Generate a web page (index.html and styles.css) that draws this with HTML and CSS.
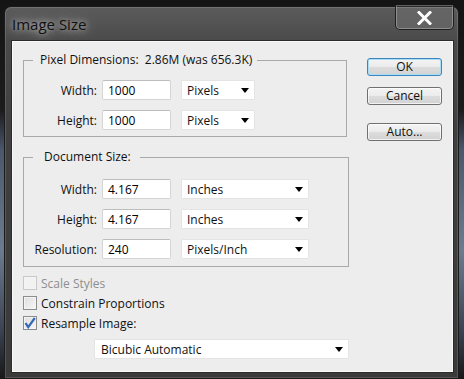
FILE: index.html
```html
<!DOCTYPE html>
<html lang="en">
<head>
    <meta charset="UTF-8" />
    <title>Image Size</title>
    <link rel="stylesheet" href="styles.css">
</head>
<body>

<div class="window">
    <div class="titlebar">
        <span class="title">Image Size</span>
        <button class="close" aria-label="Close">
            <svg width="15" height="14" viewBox="0 0 15 14">
                <path d="M2 1.5 L13 12.5 M13 1.5 L2 12.5" stroke="#fff" stroke-width="3" stroke-linecap="square" fill="none"/>
            </svg>
        </button>
    </div>

    <div class="client">
        <div class="main">
            <fieldset class="group pixel">
                <legend>Pixel Dimensions:&nbsp; 2.86M (was 656.3K)</legend>
                <div class="row">
                    <label>Width:</label>
                    <input type="text" value="1000">
                    <div class="select unit"><span>Pixels</span><i class="caret"></i></div>
                </div>
                <div class="row">
                    <label>Height:</label>
                    <input type="text" value="1000">
                    <div class="select unit"><span>Pixels</span><i class="caret"></i></div>
                </div>
            </fieldset>

            <fieldset class="group doc">
                <legend>Document Size:</legend>
                <div class="row">
                    <label>Width:</label>
                    <input type="text" value="4.167">
                    <div class="select wide"><span>Inches</span><i class="caret"></i></div>
                </div>
                <div class="row">
                    <label>Height:</label>
                    <input type="text" value="4.167">
                    <div class="select wide"><span>Inches</span><i class="caret"></i></div>
                </div>
                <div class="row">
                    <label>Resolution:</label>
                    <input type="text" value="240">
                    <div class="select wide"><span>Pixels/Inch</span><i class="caret"></i></div>
                </div>
            </fieldset>

            <div class="options">
                <div class="check disabled"><span class="box"></span>Scale Styles</div>
                <div class="check"><span class="box"></span>Constrain Proportions</div>
                <div class="check">
                    <span class="box">
                        <svg width="12" height="12" viewBox="0 0 12 12">
                            <path d="M1.5 6 L4.2 10.2 L10.8 1" stroke="#3569b8" stroke-width="2.2" fill="none"/>
                        </svg>
                    </span>Resample Image:
                </div>
            </div>

            <div class="select method"><span>Bicubic Automatic</span><i class="caret"></i></div>
        </div>

        <div class="buttons">
            <button class="btn default">OK</button>
            <button class="btn">Cancel</button>
            <button class="btn auto">Auto...</button>
        </div>
    </div>
</div>

</body>
</html>
```

FILE: styles.css
```css
* { box-sizing: border-box; }
body {
  margin: 0;
  width: 464px;
  height: 379px;
  overflow: hidden;
  background: linear-gradient(to bottom, #141414 0, #1c1c1c 110px, #4b586b 150px, #6d7b90 250px, #3b4352 330px, #171717 379px);
  font-family: "Open Sans", "Segoe UI", sans-serif;
  font-size: 12px;
  color: #000;
}

.window {
  margin: 6px 0 0 4px;
  width: 455px;
  height: 373px;
  padding: 0 4px 5px 6px;
  border: 1px solid #1a1a1a;
  border-radius: 7px 7px 0 0;
  background: linear-gradient(to bottom, #5b5b5b, #4a4a4a 34px, #404040 120px, #3a3a3a);
  box-shadow: inset 0 0 0 1px rgba(255,255,255,0.14);
  display: flex;
  flex-direction: column;
}

.titlebar {
  height: 33px;
  display: flex;
  justify-content: space-between;
  align-items: flex-start;
}
.title {
  margin: 7px 0 0 1px;
  font-size: 15px;
  color: #111;
  text-shadow: 0 0 6px rgba(235,235,235,0.8), 0 0 14px rgba(220,220,220,0.7);
}
.close {
  margin-top: -2px;
  width: 59px;
  height: 25px;
  padding: 0;
  border: 1px solid #1e1e1e;
  border-top: none;
  border-radius: 0 0 5px 5px;
  background: linear-gradient(to bottom, rgba(255,255,255,0.06), rgba(255,255,255,0.1));
  box-shadow: inset 0 0 0 1px rgba(255,255,255,0.28);
  display: flex;
  align-items: center;
  justify-content: center;
}
.close svg { margin-top: 1px; }

.client {
  flex: 1;
  display: flex;
  padding: 11px 0 0 11px;
  background: #ededed;
  border: 1px solid #2b2b2b;
  box-shadow: inset 0 0 0 1px #f9f9f9;
}

.main {
  width: 326px;
  display: flex;
  flex-direction: column;
}

.group {
  margin: 0;
  padding: 12px 0 6px 0;
  border: 1px solid #a9a9a9;
  display: flex;
  flex-direction: column;
  gap: 10px;
}
.group legend {
  margin-left: 9px;
  line-height: 16px;
  color: #111;
}
.group.pixel { width: 324px; }
.group.pixel legend { padding: 0 5px 0 7px; }
.group.doc { width: 326px; margin-top: 12px; padding: 14px 0 7px 0; }
.group.doc legend { padding: 0 9px 0 11px; }

.row {
  display: flex;
  align-items: center;
  height: 20px;
}
.row label {
  width: 73px;
  margin-right: 5px;
  text-align: right;
  color: #111;
}
.row input {
  width: 69px;
  height: 20px;
  margin: 0 10px 0 0;
  padding: 0 5px;
  border: 1px solid #d4d4d4;
  border-top-color: #bdbdbd;
  border-radius: 2px;
  background: #fff;
  font: inherit;
  color: #000;
}

.select {
  height: 20px;
  display: flex;
  align-items: center;
  justify-content: space-between;
  padding: 0 5px 0 5px;
  background: #fff;
  border: 1px solid #e4e4e4;
  border-radius: 1px;
  color: #111;
}
.select.unit { width: 74px; }
.select.wide { width: 128px; }
.select.method { width: 255px; margin: 6px 0 0 71px; padding-left: 6px; }
.caret {
  width: 0;
  height: 0;
  border-left: 4px solid transparent;
  border-right: 4px solid transparent;
  border-top: 5px solid #000;
  margin-top: 1px;
}

.options {
  margin-top: 6px;
  display: flex;
  flex-direction: column;
}
.check {
  height: 20px;
  display: flex;
  align-items: center;
  gap: 4px;
  color: #111;
}
.check .box {
  width: 14px;
  height: 14px;
  border: 1px solid #8c8c8c;
  background: linear-gradient(135deg, #dedede, #f7f7f7);
  box-shadow: inset 0 0 0 1px #f4f4f4;
  display: flex;
  align-items: center;
  justify-content: center;
}
.check.disabled { color: #8e8e8e; }
.check.disabled .box {
  border-color: #c8c8c8;
  background: #f2f2f2;
}

.buttons {
  margin: 6px 0 0 18px;
  width: 75px;
  display: flex;
  flex-direction: column;
}
.btn {
  width: 75px;
  height: 18px;
  padding: 0;
  border: 1px solid #707070;
  border-radius: 3px;
  background: linear-gradient(to bottom, #f4f4f4 0, #ebebeb 50%, #dddddd 50%, #d2d2d2 100%);
  box-shadow: inset 0 0 0 1px rgba(255,255,255,0.7);
  font: inherit;
  color: #111;
  line-height: 16px;
  margin-bottom: 11px;
}
.btn.default {
  border-color: #3d86bd;
  box-shadow: inset 0 0 0 1px #a9dcf5;
}
.btn.auto { margin-top: 7px; }
```
